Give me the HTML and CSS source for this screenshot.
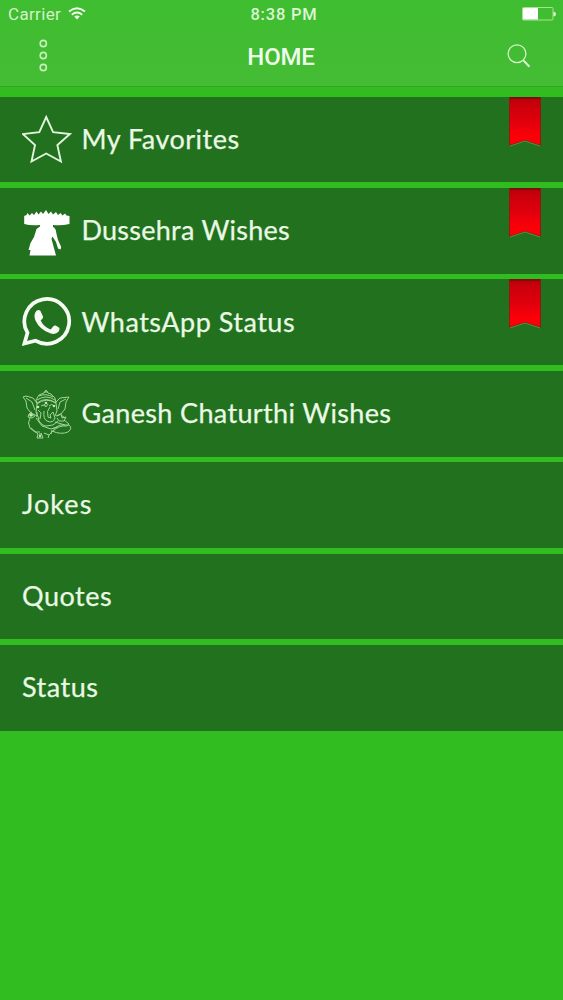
FILE: index.html
```html
<!DOCTYPE html>
<html lang="en">
<head>
<meta charset="utf-8">
<title>Home</title>
<link rel="stylesheet" href="styles.css">
</head>
<body>
<header class="header">
  <div class="status">
    <div class="carrier"><span class="carrier-name">Carrier</span>
      <svg class="wifi" width="18" height="13" viewBox="0 0 18 13" fill="none" stroke="#effbe9" stroke-width="2"><path d="M1 4.6Q9-2 17 4.6M3.8 7.7Q9 3.4 14.2 7.7"/><path d="M9 12.5L6.2 9.6Q9 7.4 11.8 9.6Z" fill="#effbe9" stroke="none"/></svg>
    </div>
    <span class="time">8:38 PM</span>
    <svg class="battery" width="35" height="14" viewBox="0 0 35 14"><rect x=".5" y=".5" width="30.5" height="12.5" rx="1" fill="none" stroke="#a5e391"/><path d="M1 1H16V12.500H1Z" fill="#fff"/><path d="M31.500 4.500Q34 5 34 7T31.500 9.500Z" fill="#e0f7d8"/></svg>
  </div>
  <div class="navbar">
    <svg class="more" width="10" height="34" viewBox="0 0 10 34" fill="none" stroke="#c9f2b9" stroke-width="1.6"><circle cx="5.300" cy="4.500" r="3.1"/><circle cx="5.300" cy="16.500" r="3.1"/><circle cx="5.300" cy="28.500" r="3.1"/></svg>
    <h1 class="title">HOME</h1>
    <svg class="search" width="24" height="24" viewBox="0 0 24 24" fill="none" stroke="#d5f5c8" stroke-width="1.3"><circle cx="10" cy="9.700" r="8.900"/><path d="M16 16L22.500 22.700" stroke-width="2"/></svg>
  </div>
</header>
<main class="list">
  <div class="row">
    <svg class="icon" width="50" height="50" viewBox="0 0 50 50" fill="none" stroke="#e2f6dc" stroke-width="1.9"><path d="M24.200 2L31.100 17.200L47.900 19L35.400 30.100L38.900 46.500L24.200 38.500L9.500 46.500L13 30.100L.8 19L17.300 17.200Z"/></svg>
    <span class="label favorites">My Favorites</span>
    <svg class="ribbon" width="33" height="50" viewBox="0 0 33 50"><defs><linearGradient id="red" x2="0" y2="1"><stop stop-color="#b40008"/><stop offset=".15" stop-color="#ca000b"/><stop offset=".5" stop-color="#df000c"/><stop offset=".8" stop-color="#fb0009"/></linearGradient></defs><path d="M.5 0H31.500V48.300L16 43.500L.5 48.300Z" fill="url(#red)" stroke="#8d1710" stroke-width=".8"/><path d="M1 .7H31" stroke="#740d0b" stroke-width="2"/><path d="M1 49L16 44L31 49" fill="none" stroke="#60994a" stroke-width=".8"/></svg>
  </div>
  <div class="row">
    <svg class="icon figure" width="50" height="50" viewBox="0 0 50 50" fill="#fff"><path d="M2.200 6L4.500 5L5.500 3L7.500 5.500L10 3L12 5L14.500 1.500L16.500 4.500L19 1.500L21 4L24 0L26.500 4L29 1.500L31 4.500L34 2L36 5L38.500 3L40.500 5.500L43 3.500L44.500 5.500L47.500 6V14Q39 16 31 15V17Q34 18 34.500 24L36 30L39.200 37L38.500 39.500L36 38.500L34 32L30.500 26.500L29.500 29L34 45.500H7.500L8.500 40H6.500L8.500 33L12 27L14.500 19L18 16.500V15Q9 16 2.200 14Z"/></svg>
    <span class="label dussehra">Dussehra Wishes</span>
    <svg class="ribbon" width="33" height="50" viewBox="0 0 33 50"><path d="M.5 0H31.500V48.300L16 43.500L.5 48.300Z" fill="url(#red)" stroke="#8d1710" stroke-width=".8"/><path d="M1 .7H31" stroke="#740d0b" stroke-width="2"/><path d="M1 49L16 44L31 49" fill="none" stroke="#60994a" stroke-width=".8"/></svg>
  </div>
  <div class="row">
    <svg class="icon" width="50" height="50" viewBox="0 0 50 50"><g transform="translate(-.8 -.5)"><path d="M3.200 47L6.300 36.300A22.400 22.400 0 1 1 14.200 44.200Z" fill="none" stroke="#f6fcf3" stroke-width="3.700"/><path d="M15.500 14Q17.500 12.800 19 14L21.800 20Q22.400 21.300 19.500 24Q22.500 30.500 29.500 33L32.400 29.500Q33.200 28.500 34.500 29.100L38 31.200Q39 32 37.500 35Q34.500 38.500 29.500 37Q18.500 33.500 14 23.500Q12 18 15.500 14Z" fill="#f6fcf3"/></g></svg>
    <span class="label whatsapp">WhatsApp Status</span>
    <svg class="ribbon" width="33" height="50" viewBox="0 0 33 50"><path d="M.5 0H31.500V48.300L16 43.500L.5 48.300Z" fill="url(#red)" stroke="#8d1710" stroke-width=".8"/><path d="M1 .7H31" stroke="#740d0b" stroke-width="2"/><path d="M1 49L16 44L31 49" fill="none" stroke="#60994a" stroke-width=".8"/></svg>
  </div>
  <div class="row">
    <svg class="icon elephant" width="50" height="50" viewBox="0 0 50 50" fill="none" stroke="#a9d9a0" stroke-width=".95"><path d="M24 1L22 4L17 6L14 11L15 15Q24 8 34 14L33 9L29 5L26 4ZM17 7Q24 4 31 8M15 11Q24 5 33 11M15 14Q24 7 34 14M22 3H26M15 15L14 23L17 30M34 14L35 22L33 27"/><path d="M15 14L11 9L4 7L1 8L4 12L5 19L9 24L15 27M4 9L10 13L13 21M34 13L38 9L47 8L44 13L43 20L39 25L34 27M44 10L38 13L36 20"/><path d="M19 17Q21 15 23 17M27 17Q30 14 32 17M22 15L24 18L26 15M16 21L19 24L18 30M22 22Q21 30 25 32Q31 35 33 29L31 23L28 26L29 29L26 28Q24 22 28 18M15 23V28M16 29Q18 36 24 37L31 36L36 32M10 23L7 25L6 28L10 29L13 27M8 29Q5 34 8 39L13 43L18 43M8 26H13M14 29L20 37L29 40L35 38M35 27L39 25L40 29L44 28L42 32L37 32L35 29M39 26L43 29M42 31L47 35L45 37Q37 36 31 42L27 46L22 44M30 42Q39 46 46 43Q51 39 47 36L38 36L31 40M9 39L16 45L15 49H21L19 44M27 46L26 49M33 33L43 36M17 45H20M30 41L29 45"/><g fill="#c2e8b8" stroke="none"><circle cx="24" cy="14" r="1.300"/><circle cx="16" cy="18" r="1.300"/><circle cx="32" cy="17" r="1.300"/><circle cx="9" cy="26" r="1.800"/><circle cx="18" cy="47" r="1.200"/></g></svg>
    <span class="label ganesh">Ganesh Chaturthi Wishes</span>
  </div>
  <div class="row"><span class="label jokes">Jokes</span></div>
  <div class="row"><span class="label quotes">Quotes</span></div>
  <div class="row"><span class="label state">Status</span></div>
</main>
</body>
</html>
```
FILE: styles.css
```css
* { box-sizing: border-box; }
body { margin: 0; min-height: 1000px; background: #31bc20; color: #eaf9e5; font-family: Lato, sans-serif; }
svg { display: block; flex: none; }
.header { height: 87px; background: linear-gradient(#3fbd30, #45bc35); border-bottom: 1px solid #32a424; }
.status { height: 29px; padding: 0 7px 0 8px; display: grid; grid-template-columns: 1fr auto 1fr; align-items: center; font: 17px Roboto, sans-serif; }
.carrier { display: flex; align-items: center; gap: 7px; margin-top: -1px; }
.carrier-name { letter-spacing: .35px; color: #d2f3c8; }
.wifi { margin-top: -1px; }
.time { margin-left: 4px; font-size: 16.5px; font-weight: 500; letter-spacing: .8px; color: #dcf6d3; }
.battery { justify-self: end; margin: -1px -1px 0 0; }
.navbar { height: 54px; padding: 0 32px 0 38px; display: grid; grid-template-columns: 1fr auto 1fr; align-items: center; }
.title { margin: 2px 7px 0 0; font: 500 24px Roboto, sans-serif; letter-spacing: -.2px; color: #effbea; }
.search { justify-self: end; }
.list { margin-top: 9.6px; display: grid; gap: 5.5px; }
.row { height: 85.9px; padding: 0 21px 0 22px; display: flex; align-items: center; gap: 10px; background: #22711e; }
.icon { margin-right: -.5px; }
.figure { margin-top: 8px; }
.elephant { margin-left: -.5px; margin-right: 0; }
.label { font-size: 27px; line-height: 32px; white-space: nowrap; padding-bottom: 1.5px; letter-spacing: .5px; -webkit-text-stroke: .25px #eaf9e5; }
.dussehra { letter-spacing: .25px; }
.ganesh { letter-spacing: .35px; }
.jokes { letter-spacing: 1.05px; }
.ribbon { align-self: flex-start; margin-left: auto; }
```
